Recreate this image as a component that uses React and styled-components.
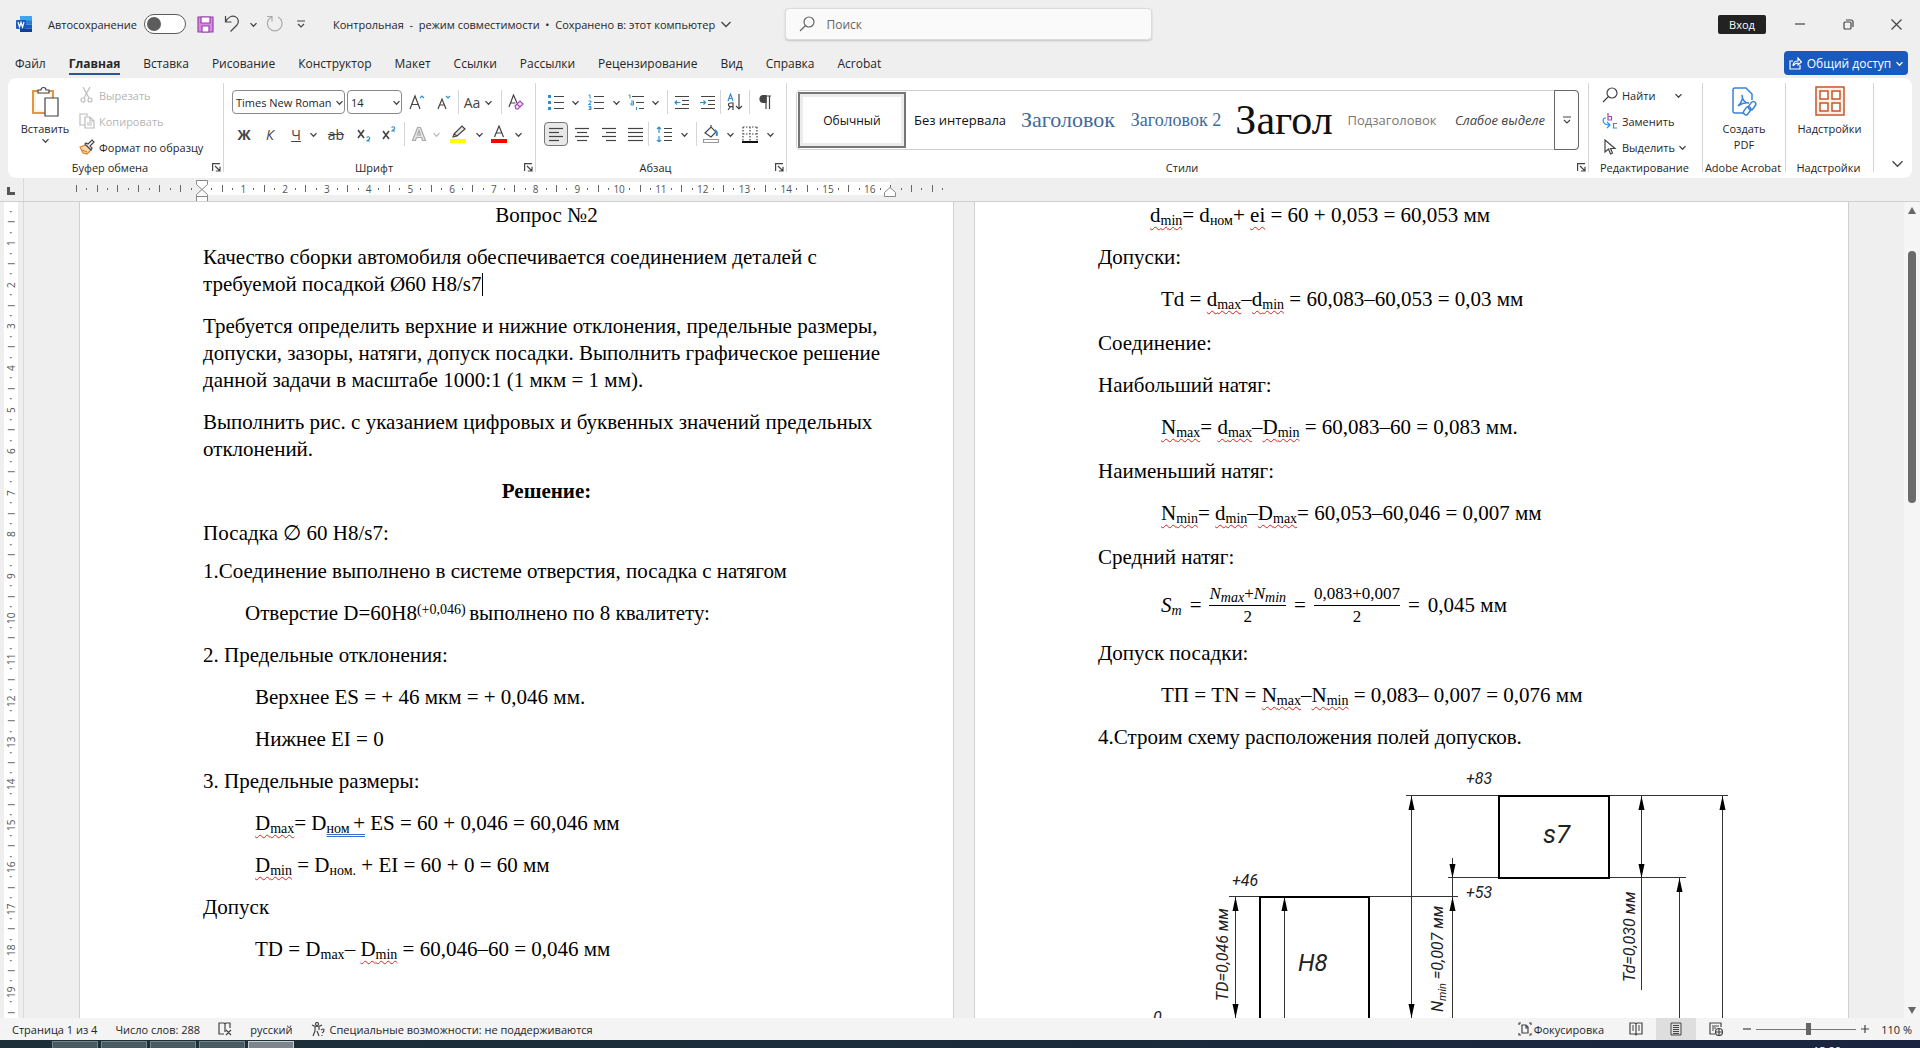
import React, { useState } from 'react'
import styled, { createGlobalStyle, css } from 'styled-components'

const GlobalStyle = createGlobalStyle`
    * {
        box-sizing: border-box;
    }
    body {
        margin: 0;
        background: #efefef;
        color: #262626;
        font-family: 'Open Sans', 'Noto Sans', sans-serif;
        font-size: 12px;
        overflow: hidden;
    }
    button, input, select {
        font: inherit;
        color: inherit;
        margin: 0;
        padding: 0;
        border: 0;
        background: none;
    }
    svg {
        display: block;
        flex: none;
    }
`;

const Window = styled.div`
    display: flex;
    flex-direction: column;
    height: 100vh;
    min-width: 1200px;
    white-space: nowrap;
`;

// @TITLE BAR
const TitleBar = styled.header`
    display: grid;
    grid-template-columns: 1fr 367px 1fr;
    align-items: center;
    height: 48px;
    padding: 0 0 0 16px;
    column-gap: 8px;
`;
const QuickBar = styled.div`
    display: flex;
    align-items: center;
`;
const AutoSave = styled.label`
    display: flex;
    align-items: center;
    justify-content: space-between;
    width: 138px;
    margin: 0 11px 0 15px;
    font-size: 11px;
`;
const Switch = styled.input`
    appearance: none;
    width: 42px;
    height: 20px;
    border: 1px solid #5c5c5c;
    border-radius: 10px;
    background: #fff;
    &::before {
        content: '';
        display: block;
        width: 14px;
        height: 14px;
        margin: 2px;
        border-radius: 50%;
        background: #5c5c5c;
    }
`;
const DocName = styled.button`
    display: flex;
    align-items: center;
    gap: 6px;
    margin-left: 22px;
    font-size: 11px;
    white-space: pre;
`;
const Search = styled.label`
    display: flex;
    align-items: center;
    gap: 12px;
    height: 32px;
    padding: 0 13px;
    border: 1px solid #dcdcdc;
    border-radius: 4px;
    background: #fafafa;
    box-shadow: 0 1px 2px #c4c4c4;
    color: #666;
    input {
        flex: 1;
        outline: 0;
    }
    input::placeholder {
        color: #666;
        opacity: 1;
    }
`;
const WindowButtons = styled.div`
    display: flex;
    align-items: center;
    justify-content: flex-end;
`;
const SignIn = styled.button`
    width: 48px;
    height: 19px;
    margin-right: 10px;
    border-radius: 2px;
    background: #222;
    color: #fff;
    font-size: 11px;
`;
const WindowButton = styled.button`
    display: flex;
    justify-content: center;
    width: 48px;
`;

// @TABS
const TabBar = styled.nav`
    display: flex;
    align-items: center;
    justify-content: space-between;
    height: 30px;
    padding: 0 12px 0 15px;
`;
const Tabs = styled.div`
    display: flex;
    gap: 23px;
`;
const Tab = styled.button`
    height: 24px;
    padding-top: 2px;
    border-bottom: 2px solid transparent;
    ${props => props.$active && css`
        border-color: #2b579a;
        font-weight: 700;
    `}
`;
const Share = styled.button`
    display: flex;
    align-items: center;
    justify-content: center;
    gap: 5px;
    width: 124px;
    height: 24px;
    border-radius: 4px;
    background: #185abd;
    color: #fff;
`;

// @RIBBON
const Ribbon = styled.section`
    display: flex;
    height: 100px;
    margin: 0 8px;
    padding: 5px 0 6px;
    border-radius: 8px;
    background: #fff;
`;
const Group = styled.div`
    display: flex;
    flex-direction: column;
    flex: ${props => props.$width ? `0 0 ${props.$width}px` : '1'};
    min-width: 0;
    border-right: 1px solid #d6d6d6;
`;
const GroupBody = styled.div`
    display: flex;
    flex: 1;
    padding: ${props => props.$pad || '0'};
`;
const GroupLabel = styled.div`
    display: flex;
    align-items: center;
    height: 16px;
    padding-right: 2px;
    margin-bottom: -3px;
    font-size: 11px;
    span {
        flex: 1;
        text-align: center;
    }
`;
const BigButton = styled.button`
    display: flex;
    flex-direction: column;
    align-items: center;
    width: ${props => props.$width};
    padding-top: 3px;
    font-size: 11px;
    line-height: 16px;
    svg:first-child {
        margin-bottom: 4px;
    }
`;
const Stack = styled.div`
    display: flex;
    flex-direction: column;
    gap: 2px;
`;
const LineButton = styled.button`
    display: flex;
    align-items: center;
    gap: 4px;
    height: 24px;
    font-size: 11px;
    opacity: ${props => props.disabled ? '.35' : '1'};
`;
const ToolRows = styled.div`
    display: flex;
    flex-direction: column;
    gap: 8px;
`;
const ToolRow = styled.div`
    display: flex;
    align-items: center;
    height: 24px;
`;
const Tool = styled.button`
    display: flex;
    align-items: center;
    justify-content: center;
    width: ${props => props.$width || 26}px;
    height: 24px;
    color: #444;
    font-size: 14px;
    ${props => props.$active && css`
        border: 1px solid #777;
        border-radius: 4px;
        background: #e8e8e8;
    `}
`;
const Space = styled.i`
    width: ${props => props.$width}px;
`;
const Divider = styled.i`
    width: 1px;
    height: 24px;
    background: #d6d6d6;
`;
const Picker = styled.label`
    position: relative;
    width: ${props => props.$width}px;
    margin-right: 2px;
    select {
        appearance: none;
        width: 100%;
        height: 24px;
        padding: 0 12px 0 3px;
        border: 1px solid #8a8a8a;
        border-radius: 4px;
        background: #fff;
        font-size: 11px;
    }
    svg {
        position: absolute;
        right: 2px;
        top: 9px;
    }
`;
const Gallery = styled.div`
    display: flex;
    flex: 1;
    height: 60px;
    border: 1px solid #d0d0d0;
    border-radius: 4px;
    padding-left: 1px;
`;
const StyleCard = styled.button`
    flex: 0 1 108px;
    min-width: 0;
    height: 56px;
    margin-top: 1px;
    padding: 0 4px;
    overflow: hidden;
    ${props => props.$active && css`
        border: 2px solid #757575;
        box-shadow: inset 0 0 0 3px #ececec;
    `}
`;
const CardText = styled.span`
    display: block;
    font-size: ${props => props.$size || 12}px;
    font-family: ${props => props.$serif ? "'Liberation Serif', serif" : 'inherit'};
    font-style: ${props => props.$italic ? 'italic' : 'normal'};
    color: ${props => props.$color || '#111'};
`;
const GalleryMore = styled.button`
    display: flex;
    align-items: center;
    justify-content: center;
    flex: 0 0 25px;
    height: 60px;
    margin: -1px -1px 0 auto;
    border: 1px solid #666;
    border-radius: 0 4px 4px 0;
`;
const RibbonEnd = styled.button`
    display: flex;
    align-items: flex-end;
    justify-content: center;
    flex: 0 0 38px;
    padding: 0 0 3px 9px;
`;

// @RULERS
const RulerBar = styled.div`
    display: flex;
    height: 24px;
    border-bottom: 1px solid #cfcfcf;
`;
const Corner = styled.div`
    flex: 0 0 24px;
    padding: 9px 0 0 7px;
    border-right: 1px solid #dadada;
`;
const RulerTrack = styled.div`
    flex: 1;
    display: flex;
    justify-content: center;
    padding-right: 16px;
    overflow: hidden;
`;
const RulerSpread = styled.div`
    flex: 0 0 1770px;
`;
const Scale = styled.div`
    position: relative;
    display: grid;
    grid-template-columns: repeat(84, 1fr);
    align-items: center;
    width: 877px;
    height: 13px;
    margin: 4px 0 0 -8px;
    background: linear-gradient(to right, #efefef 131px, #fff 131px, #fff 819px, #efefef 819px);
`;
const Mark = styled.span`
    display: flex;
    align-items: center;
    justify-content: center;
    min-width: 0;
    min-height: 0;
    font-size: 10px;
    line-height: 10px;
    color: #555;
    i {
        width: 1px;
        height: ${props => props.$long ? '7px' : '2px'};
        background: #666;
    }
`;
const IndentMark = styled.svg`
    position: absolute;
    left: ${props => props.$left}px;
    top: ${props => props.$top}px;
`;
const SideRuler = styled.div`
    flex: 0 0 24px;
    padding: 0 5px 0 4px;
    border-right: 1px solid #dadada;
    overflow: hidden;
`;
const SideScale = styled.div`
    display: grid;
    grid-template-rows: repeat(78, 1fr);
    height: 816px;
    padding-top: 5px;
    background: #fff;
    ${Mark} {
        transform: rotate(-90deg);
    }
`;

// @DOCUMENT
const Workspace = styled.main`
    display: flex;
    flex: 1;
    min-height: 0;
`;
const Canvas = styled.div`
    display: flex;
    justify-content: center;
    gap: 20px;
    flex: 1;
    min-width: 0;
    overflow: hidden;
`;
const Page = styled.article`
    flex: 0 0 875px;
    padding: 0 63px 0 123px;
    border: solid #cfcfcf;
    border-width: 0 1px;
    background: #fff;
    color: #000;
    font: 21px/27px 'Liberation Serif', serif;
    overflow: hidden;
`;
const Para = styled.p`
    margin: 0 0 ${props => props.$after || 15}px;
    padding-left: ${props => props.$indent || 0}px;
    text-align: ${props => props.$center ? 'center' : 'left'};
    font-weight: ${props => props.$bold ? 700 : 400};
`;
const Sub = styled.sub`
    font-size: 14px;
    line-height: 0;
    vertical-align: -3px;
`;
const Sup = styled.sup`
    font-size: 14px;
    line-height: 0;
    vertical-align: 6px;
`;
const Misspelt = styled.span`
    text-decoration: underline wavy #e02020 1px;
    text-decoration-skip-ink: none;
    text-underline-offset: 4px;
`;
const Grammar = styled.span`
    text-decoration: underline double #3a6cc8 1px;
    text-decoration-skip-ink: none;
    text-underline-offset: 4px;
`;
const Caret = styled.i`
    display: inline-block;
    width: 1px;
    height: 23px;
    background: #000;
    vertical-align: -5px;
`;
const Equation = styled.div`
    display: flex;
    align-items: center;
    gap: 8px;
    height: 38px;
    margin-bottom: 16px;
    padding-left: 63px;
`;
const Fraction = styled.span`
    display: flex;
    flex-direction: column;
    align-items: center;
    font-size: 17px;
    line-height: 22px;
    span:first-child {
        border-bottom: 1px solid #000;
    }
`;
const Figure = styled.svg`
    margin-left: 43px;
    font: italic 16px Roboto, 'Open Sans', sans-serif;
`;
const ScrollBar = styled.div`
    display: flex;
    flex-direction: column;
    align-items: center;
    flex: 0 0 16px;
    padding: 5px 0 4px;
    background: #f5f5f5;
`;
const ScrollThumb = styled.div`
    width: 8px;
    height: 252px;
    margin: 37px 0 auto;
    border-radius: 4px;
    background: #6b6b6b;
`;

// @STATUS BAR
const StatusBar = styled.footer`
    display: flex;
    align-items: center;
    height: 22px;
    padding: 0 8px 0 12px;
    background: #f4f4f4;
    font-size: 11px;
`;
const StatusItem = styled.button`
    display: flex;
    align-items: center;
    gap: 4px;
    margin-right: 18px;
`;
const Focus = styled(StatusItem)`
    gap: 2px;
    margin: 0 12px 0 auto;
`;
const ViewButton = styled.button`
    display: flex;
    align-items: center;
    justify-content: center;
    width: 40px;
    height: 22px;
    background: ${props => props.$active ? '#dedede' : 'none'};
`;
const Zoom = styled.div`
    display: flex;
    align-items: center;
    gap: 5px;
    margin-left: 7px;
    output {
        width: 38px;
        text-align: right;
    }
`;
const Slider = styled.input`
    appearance: none;
    width: 100px;
    height: 12px;
    background: linear-gradient(#777, #777) center / 100% 1px no-repeat;
    &::-webkit-slider-thumb {
        appearance: none;
        width: 5px;
        height: 12px;
        background: #666;
    }
`;
const TaskBar = styled.div`
    display: flex;
    gap: 3px;
    height: 8px;
    padding: 1px 79px 0 52px;
    background: linear-gradient(to right, #1d3039, #1b2b3a 50%, #1a2440);
    overflow: hidden;
`;
const Task = styled.div`
    width: 46px;
    height: 20px;
    border: 1px solid ${props => props.$active ? '#c9ced2' : '#74848a'};
    background: ${props => props.$active ? '#7d858c' : '#4a5a61'};
`;
const Clock = styled.time`
    margin-left: auto;
    padding-top: 2px;
    color: #fff;
    font-size: 11px;
`;

const Icon = ({ w = 16, h = 16, children }) => (
    <svg width={w} height={h} viewBox={`0 0 ${w} ${h}`} fill="none" stroke="#444" strokeWidth="1.2">{children}</svg>
)
const Chevron = ({ color = '#444', size = 7 }) => (
    <svg width={size} height={size} viewBox={`0 0 ${size} ${size}`} fill="none" stroke={color} strokeWidth="1.3">
        <path d={`M.5 ${size * 0.3}L${size / 2} ${size * 0.75}L${size - 0.5} ${size * 0.3}`} />
    </svg>
)
const Launcher = () => (
    <Icon w={9} h={9}><path d="M.6 8V.6H8M3 3l5 5M8 3.8V8H3.8" /></Icon>
)
const Lines = ({ rows }) => (
    <Icon w={15} h={15}>{rows.map(([x, len], i) => <path key={i} d={`M${x} ${1.5 + i * 4}h${len}`} />)}</Icon>
)

const TABS = ['Файл', 'Главная', 'Вставка', 'Рисование', 'Конструктор', 'Макет', 'Ссылки', 'Рассылки', 'Рецензирование', 'Вид', 'Справка', 'Acrobat']

function Title () {
    return (
        <TitleBar>
            <QuickBar>
                <svg width="17" height="17" viewBox="0 0 17 17">
                    <path d="M4 0h12v5H4z" fill="#41a5ee" /><path d="M4 4.5h12v4H4z" fill="#2b7cd3" />
                    <path d="M4 8.5h12v4H4z" fill="#185abd" /><path d="M4 12.5h12V16H4z" fill="#103f91" />
                    <rect y="4" width="10" height="9" rx="1" fill="#185abd" />
                    <path d="m2 6 1.5 5L5 6.5 6.5 11 8 6" stroke="#fff" strokeWidth="1.2" fill="none" />
                </svg>
                <AutoSave>Автосохранение<Switch type="checkbox" /></AutoSave>
                <button aria-label="Сохранить">
                    <Icon w={17} h={17}><path d="M1 1h15v15H1z" fill="#d58be0" stroke="#9b3fae" /><path d="M4 1h9v6H4zM5 16v-6h7v6z" fill="#fff" stroke="#9b3fae" /></Icon>
                </button>
                <Tool $width={36} aria-label="Отменить"><Icon w={16} h={18}><path d="M1.5 1v6h6M1.5 7C4 2 8 .5 11 1.5c4 1.500 4 6 2 8.500L6.500 16.500" /></Icon></Tool>
                <Chevron />
                <Tool $width={34} aria-label="Повторить"><Icon w={17} h={18}><g stroke="#aaa"><path d="M1 1.500h5v5M5.500 2A7.300 7.300 0 1 0 12 2" /></g></Icon></Tool>
                <Tool $width={20} aria-label="Настроить панель"><Icon w={8} h={8}><path d="M0 1h8M1 4l3 3 3-3" /></Icon></Tool>
                <DocName>{'Контрольная  -  режим совместимости  •  Сохранено в: этот компьютер'}<Chevron size={10} /></DocName>
            </QuickBar>
            <Search>
                <Icon><circle cx="10" cy="6" r="5" stroke="#666" /><path d="M6.500 9.500 1 15" stroke="#666" /></Icon>
                <input type="search" placeholder="Поиск" aria-label="Поиск" />
            </Search>
            <WindowButtons>
                <SignIn>Вход</SignIn>
                <WindowButton aria-label="Свернуть"><Icon w={10} h={10}><path d="M0 5h10" /></Icon></WindowButton>
                <WindowButton aria-label="Восстановить"><Icon w={11} h={11}><rect x="1" y="3" width="7" height="7" rx="1" /><path d="M3 1h5q2 0 2 2v5" /></Icon></WindowButton>
                <WindowButton aria-label="Закрыть"><Icon w={11} h={11}><path d="m.5.5 10 10M10.500.5l-10 10" /></Icon></WindowButton>
            </WindowButtons>
        </TitleBar>
    )
}

function Clipboard () {
    return (
        <Group $width={216}>
            <GroupBody $pad="0 0 0 3px">
                <BigButton $width="68px">
                    <Icon w={28} h={31}>
                        <path d="M2 5h20v22H2z" fill="#fdf3e4" stroke="#e3963e" strokeWidth="2" />
                        <path d="M5 8h14v16H5z" fill="#fff" stroke="none" />
                        <path d="M7 7V4h3a2.500 2.500 0 0 1 5 0h3v3z" fill="#fff" />
                        <path d="M14 12h13v18H14z" fill="#fff" />
                    </Icon>
                    Вставить
                    <Chevron />
                </BigButton>
                <Stack>
                    <LineButton disabled><Icon><path d="m4 0 6 11M11 0 5 11" /><circle cx="4" cy="13" r="2" /><circle cx="11" cy="13" r="2" /></Icon>Вырезать</LineButton>
                    <LineButton disabled><Icon><path d="M6 12H1V1h7v2M6 4h5l4 4v7H6zM11 4v4h4M8 10h5M8 12h5" /></Icon>Копировать</LineButton>
                    <LineButton>
                        <Icon><path d="m1 8 3 6 4 1 4-4-5-5z" fill="#fbd9ae" stroke="#d9822b" /><path d="m3 11 5 2" stroke="#d9822b" /><path d="m6 5 6 6 1-2-2-2 4-4-2-2-4 4-2-1z" fill="#fff" /></Icon>
                        Формат по образцу
                    </LineButton>
                </Stack>
            </GroupBody>
            <GroupLabel><span>Буфер обмена</span><Launcher /></GroupLabel>
        </Group>
    )
}

function FontGroup () {
    return (
        <Group $width={312}>
            <GroupBody $pad="7px 0 0 8px">
                <ToolRows>
                    <ToolRow>
                        <Picker $width={113}>
                            <select aria-label="Шрифт"><option>Times New Roman</option></select>
                            <Chevron />
                        </Picker>
                        <Picker $width={55}>
                            <select aria-label="Размер шрифта"><option>14</option></select>
                            <Chevron />
                        </Picker>
                        <Tool $width={26} aria-label="Увеличить размер"><Icon><path d="m1 15 5-13 5 13M3 10.500h6" /><path d="m11 4 2-2 2 2" stroke="#2f8fd0" /></Icon></Tool>
                        <Tool $width={28} aria-label="Уменьшить размер"><Icon><path d="m2 15 4-10 4 10M3.500 11h5" /><path d="m10 2 2 2 2-2" stroke="#2f8fd0" /></Icon></Tool>
                        <Divider />
                        <Tool $width={26}>Aa</Tool><Chevron />
                        <Space $width={9} />
                        <Divider />
                        <Tool $width={28} aria-label="Очистить формат"><Icon><path d="M1 13 5.500 1 9 9M2.500 9h5" /><path d="m7 12 5-5 3 3-5 5H8zM9 10l3 3" stroke="#a347b5" fill="#f5e3f8" /></Icon></Tool>
                    </ToolRow>
                    <ToolRow>
                        <Tool $width={24}><b>Ж</b></Tool>
                        <Tool $width={28}><i>К</i></Tool>
                        <Tool $width={24}><u>Ч</u></Tool><Tool $width={10}><Chevron /></Tool>
                        <Tool $width={36}><s>ab</s></Tool>
                        <Tool $width={20} aria-label="Подстрочный"><Icon><path d="m2 4 6 8M8 4l-6 8" strokeWidth="1.600" /><path d="M10.500 11.500q2-1.500 3 0t-3 3.500h3.500" stroke="#2f8fd0" /></Icon></Tool>
                        <Tool $width={30} aria-label="Надстрочный"><Icon><path d="m2 5 6 8M8 5l-6 8" strokeWidth="1.600" /><path d="M10.500 1.500q2-1.500 3 0t-3 3.500h3.500" stroke="#2f8fd0" /></Icon></Tool>
                        <Divider />
                        <Tool $width={28} aria-label="Эффекты"><Icon><path d="M1.500 14.500 6.500 1.500h3l5 13h-3l-1-3h-5l-1 3zM6.500 9h3L8 4.500z" stroke="#aaa" fill="#e6e6e6" /></Icon></Tool>
                        <Chevron color="#bbb" />
                        <Tool $width={36} aria-label="Выделение цветом"><Icon w={16} h={18}><path d="m4 9 8-8 3 3-8 7-4 1zM4 9l3 2" fill="#e8e8e8" /><path d="M0 14h16v4H0z" fill="#ffff00" stroke="none" /></Icon></Tool>
                        <Chevron />
                        <Tool $width={32} aria-label="Цвет текста"><Icon w={16} h={18}><path d="M3.500 12 8 1l4.500 11M5 8h6" /><path d="M0 14h16v4H0z" fill="#f00" stroke="none" /></Icon></Tool>
                        <Chevron />
                    </ToolRow>
                </ToolRows>
            </GroupBody>
            <GroupLabel><span>Шрифт</span><Launcher /></GroupLabel>
        </Group>
    )
}

function ParagraphGroup () {
    const blue = '#2f8fd0'
    return (
        <Group $width={251}>
            <GroupBody $pad="7px 0 0 8px">
                <ToolRows>
                    <ToolRow>
                        <Tool $width={24} aria-label="Маркеры"><Icon><path d="M6 2.500h10M6 8.500h10M6 14.500h10" /><path d="M0 1h3v3H0zM0 7h3v3H0zM0 13h3v3H0z" fill={blue} stroke="none" /></Icon></Tool><Tool $width={14}><Chevron /></Tool>
                        <Tool $width={28} aria-label="Нумерация"><Icon><path d="M6 2.500h10M6 8.500h10M6 14.500h10" /><path d="M.5 1h1.500v3.500M.5 7H3v1.500L.5 10.500H3M.5 12.500H3v3H.5M1 14h2" stroke={blue} strokeWidth="1" /></Icon></Tool><Tool $width={12}><Chevron /></Tool>
                        <Tool $width={28} aria-label="Многоуровневый список"><Icon><path d="M4 2.500h12M8 8.500h8M11 14.500h5" /><path d="M.5 1H2v3.500M3 7h2.500v4H3V9h2M8.500 13v3" stroke={blue} strokeWidth="1" /></Icon></Tool><Tool $width={10}><Chevron /></Tool>
                        <Space $width={7} />
                        <Divider />
                        <Tool $width={26} aria-label="Уменьшить отступ"><Icon w={15} h={15}><path d="M1 1.500h14M8 5.500h7M8 9.500h7M1 13.500h14" /><path d="M6.500 7.500H1m2-2-2 2 2 2" stroke={blue} /></Icon></Tool>
                        <Tool $width={26} aria-label="Увеличить отступ"><Icon w={15} h={15}><path d="M1 1.500h14M8 5.500h7M8 9.500h7M1 13.500h14" /><path d="M0 7.500h5.500m-2-2 2 2-2 2" stroke={blue} /></Icon></Tool>
                        <Divider />
                        <Tool $width={28} aria-label="Сортировка"><Icon w={16} h={18}><path d="m1 8 2.500-7L6 8M2 5.500h3" stroke={blue} /><path d="M6 17v-7H3.500q-2 0-2 1.800t2 1.800H6M3.500 13.600 1 17M12 1v15m-3-3 3 3 3-3" /></Icon></Tool>
                        <Divider />
                        <Tool $width={30} aria-label="Знаки"><Icon w={14} h={16}><path d="M6 2h7M8 2v13M11.500 2v13" /><path d="M8 1.500H5.500a3.500 3.500 0 0 0 0 7H8z" fill="#444" /></Icon></Tool>
                    </ToolRow>
                    <ToolRow>
                        <Tool $width={24} $active aria-label="По левому краю"><Lines rows={[[0, 14], [0, 10], [0, 14], [0, 10]]} /></Tool>
                        <Tool $width={28} aria-label="По центру"><Lines rows={[[0, 14], [2, 10], [0, 14], [2, 10]]} /></Tool>
                        <Tool $width={26} aria-label="По правому краю"><Lines rows={[[0, 14], [4, 10], [0, 14], [4, 10]]} /></Tool>
                        <Tool $width={26} aria-label="По ширине"><Lines rows={[[0, 15], [0, 15], [0, 15], [0, 15]]} /></Tool>
                        <Divider />
                        <Tool $width={30} aria-label="Интервал"><Icon><path d="M8 2.500h8M8 6.500h8M8 10.500h8M8 14.500h8" /><path d="M3 1v6M1 3l2-2 2 2M3 16v-6M1 14l2 2 2-2" stroke={blue} /></Icon></Tool>
                        <Tool $width={10}><Chevron /></Tool>
                        <Space $width={7} />
                        <Divider />
                        <Tool $width={28} aria-label="Заливка"><Icon w={16} h={18}><path d="m2 8 6-6 5 5-5 5zM8 2V0" /><path d="M12 5q3 2 1.500 6" stroke={blue} strokeWidth="2" /><path d="M.5 14.500h15v3H.5z" fill="#fff" stroke="#999" /></Icon></Tool>
                        <Tool $width={10}><Chevron /></Tool>
                        <Tool $width={30} aria-label="Границы"><Icon w={16} h={17}><path d="M1 1h14M1 8h14M1 1v14M8 1v14M15 1v14" strokeDasharray="1.500 1.500" /><path d="M0 16h16" stroke="#111" strokeWidth="2" /></Icon></Tool>
                        <Tool $width={10}><Chevron /></Tool>
                    </ToolRow>
                </ToolRows>
            </GroupBody>
            <GroupLabel><span>Абзац</span><Launcher /></GroupLabel>
        </Group>
    )
}

function StylesGroup () {
    return (
        <Group>
            <GroupBody $pad="7px 9px 0 9px">
                <Gallery>
                    <StyleCard $active><CardText>Обычный</CardText></StyleCard>
                    <StyleCard><CardText $size={13}>Без интервала</CardText></StyleCard>
                    <StyleCard><CardText $serif $size={22} $color="#44699b">Заголовок</CardText></StyleCard>
                    <StyleCard><CardText $serif $size={18} $color="#44699b">Заголовок 2</CardText></StyleCard>
                    <StyleCard><CardText $serif $size={42}>Загол</CardText></StyleCard>
                    <StyleCard><CardText $size={13} $color="#777">Подзаголовок</CardText></StyleCard>
                    <StyleCard><CardText $size={13} $italic $color="#444">Слабое выделе</CardText></StyleCard>
                    <GalleryMore aria-label="Дополнительно"><Icon w={8} h={8}><path d="M0 1h8M1 4l3 3 3-3" /></Icon></GalleryMore>
                </Gallery>
            </GroupBody>
            <GroupLabel><span>Стили</span><Launcher /></GroupLabel>
        </Group>
    )
}

function RightGroups () {
    return (
        <>
            <Group $width={114}>
                <GroupBody $pad="0 0 0 13px">
                    <Stack>
                        <LineButton><Icon><circle cx="10" cy="6" r="5" /><path d="M6.500 9.500 1 15" /></Icon>Найти<Tool as="span" $width={38}><Chevron /></Tool></LineButton>
                        <LineButton><Icon><path d="M6 0v7h3.500V3.500H6" stroke="#a347b5" /><path d="M15 10.500h-3.500V15H15M4 5Q0 5 1.500 9 3 12 7 12m-2-3 3 3-3 3" stroke="#2f8fd0" /></Icon>Заменить</LineButton>
                        <LineButton><Icon><path d="M3 1v12l3.500-3 2 5 2-1-2-4.500H13z" /></Icon>Выделить<Chevron /></LineButton>
                    </Stack>
                </GroupBody>
                <GroupLabel><span>Редактирование</span></GroupLabel>
            </Group>
            <Group $width={83}>
                <GroupBody>
                    <BigButton $width="100%">
                        <Icon w={28} h={31}>
                            <g stroke="#3b82d9" strokeWidth="1.500"><path d="M13 27H5q-2 0-2-2V4q0-2 2-2h11l6 6v6M8 20c4-4 5-8 4-11 0 6 4 8 7 8-4-1-8 1-11 3" /><rect x="20" y="15" width="5" height="9" rx="2.500" transform="rotate(35 22 19)" /><rect x="15" y="20" width="5" height="9" rx="2.500" transform="rotate(35 17 24)" /></g>
                        </Icon>
                        <span>Создать<br />PDF</span>
                    </BigButton>
                </GroupBody>
                <GroupLabel><span>Adobe Acrobat</span></GroupLabel>
            </Group>
            <Group $width={88}>
                <GroupBody>
                    <BigButton $width="100%">
                        <Icon w={30} h={31}><g stroke="#c8562b" strokeWidth="1.500"><path d="M1 1h28v28H1z" fill="#fdf0e6" /><path d="M5 5h8v8H5zM17 5h8v8h-8zM5 17h8v8H5zM17 17h8v8h-8z" fill="#fff" /></g></Icon>
                        Надстройки
                    </BigButton>
                </GroupBody>
                <GroupLabel><span>Надстройки</span></GroupLabel>
            </Group>
        </>
    )
}

// quarter-centimetre marks; whole centimetres carry a number
const marks = (from, to) => {
    const list = []
    for (let q = from; q <= to; q++) {
        const num = q > 0 && q <= 76 && q % 4 === 0
        list.push({ q, num: num ? q / 4 : null })
    }
    return list
}

function Rulers () {
    return (
        <RulerBar>
            <Corner><svg width="8" height="8"><path d="M1.500 0v6.500H8" fill="none" stroke="#555" strokeWidth="3" /></svg></Corner>
            <RulerTrack>
                <RulerSpread>
                    <Scale>
                        {marks(-12, 71).map(({ q, num }) => (
                            <Mark key={q} $long={q % 2 === 0}>{q === 0 ? null : num && num < 17 ? num : <i />}</Mark>
                        ))}
                        <IndentMark $left={125} $top={-2} width="13" height="23" viewBox="0 0 13 23" fill="#fff" stroke="#888">
                            <path d="M.5.5h11v4L6 9.500.5 4.500zM6 9.500l5.500 5v2H.5v-2zM.5 16.500h11v5H.5z" />
                        </IndentMark>
                        <IndentMark $left={813} $top={5} width="13" height="12" viewBox="0 0 13 12" fill="#fff" stroke="#888">
                            <path d="M6 .5l5.500 5v4H.5v-4z" />
                        </IndentMark>
                    </Scale>
                </RulerSpread>
            </RulerTrack>
        </RulerBar>
    )
}

const Max = ({ v }) => <Misspelt>{v}<Sub>max</Sub></Misspelt>
const Min = ({ v }) => <Misspelt>{v}<Sub>min</Sub></Misspelt>

function FirstPage () {
    return (
        <Page>
            <Para $center>Вопрос №2</Para>
            <Para>Качество сборки автомобиля обеспечивается соединением деталей с<br />требуемой посадкой Ø60 H8/s7<Caret /></Para>
            <Para>Требуется определить верхние и нижние отклонения, предельные размеры,<br />допуски, зазоры, натяги, допуск посадки. Выполнить графическое решение<br />данной задачи в масштабе 1000:1 (1 мкм = 1 мм).</Para>
            <Para>Выполнить рис. с указанием цифровых и буквенных значений предельных<br />отклонений.</Para>
            <Para $center $bold>Решение:</Para>
            <Para $after={11}>Посадка ∅ 60 H8/s7:</Para>
            <Para>1.Соединение выполнено в системе отверстия, посадка с натягом</Para>
            <Para $indent={42}>Отверстие D=60H8<Sup>(+0,046) </Sup>выполнено по 8 квалитету:</Para>
            <Para>2. Предельные отклонения:</Para>
            <Para $indent={52}>Верхнее ES = + 46 мкм = + 0,046 мм.</Para>
            <Para $indent={52}>Нижнее EI = 0</Para>
            <Para>3. Предельные размеры:</Para>
            <Para $indent={52}><Max v="D" />= D<Grammar><Sub>ном </Sub>+</Grammar> ES = 60 + 0,046 = 60,046 мм</Para>
            <Para $indent={52}><Min v="D" /> = D<Sub>ном.</Sub> + EI = 60 + 0 = 60 мм</Para>
            <Para>Допуск</Para>
            <Para $indent={52}>TD = D<Sub>max</Sub>– <Min v="D" /> = 60,046–60 = 0,046 мм</Para>
        </Page>
    )
}

const Arrow = ({ x, y, down }) => (
    <path d={down ? `M${x} ${y}l-3-14h6z` : `M${x} ${y}l-3 14h6z`} fill="#000" stroke="none" />
)

function ToleranceFigure () {
    return (
        <Figure width="600" height="300" viewBox="1142 760 600 300" fill="#222">
            <g stroke="#333" fill="none">
                <path d="M1407 795.500h322M1449 877.500h238M1230 896.500h229" />
                <path d="M1412.500 796v222M1723.500 796v264M1642.500 796v194M1680.500 878v182M1453.500 858v202M1236.500 897v163M1285.500 897v163" />
            </g>
            <g stroke="#000" strokeWidth="2" fill="none">
                <path d="M1500 796h110v82h-110zM1261 1060V897h109v163" />
            </g>
            <Arrow x={1412.5} y={796} /><Arrow x={1412.5} y={1018} down />
            <Arrow x={1723.5} y={796} />
            <Arrow x={1642.5} y={796} /><Arrow x={1642.5} y={878} down />
            <Arrow x={1680.5} y={878} />
            <Arrow x={1453.5} y={878} down /><Arrow x={1453.5} y={897} />
            <Arrow x={1236.5} y={897} /><Arrow x={1236.5} y={1018} down />
            <Arrow x={1285.5} y={897} />
            <text x="1467" y="784">+83</text>
            <text x="1233" y="886">+46</text>
            <text x="1467" y="898">+53</text>
            <text x="1544" y="843" fontSize="26">s7</text>
            <text x="1299" y="971" fontSize="24">H8</text>
            <text x="1154" y="1023">0</text>
            <text transform="translate(1229 1001) rotate(-90)">TD=0,046 мм</text>
            <text transform="translate(1444 1012) rotate(-90)">N<tspan fontSize="11" dy="3">min</tspan><tspan dy="-3"> =0,007 мм</tspan></text>
            <text transform="translate(1636 982) rotate(-90)">Td=0,030 мм</text>
        </Figure>
    )
}

function SecondPage () {
    return (
        <Page>
            <Para $indent={52}><Min v="d" />= d<Sub>ном</Sub>+ <Misspelt>ei</Misspelt> = 60 + 0,053 = 60,053 мм</Para>
            <Para>Допуски:</Para>
            <Para $indent={63} $after={17}>Td = <Max v="d" />–<Min v="d" /> = 60,083–60,053 = 0,03 мм</Para>
            <Para>Соединение:</Para>
            <Para>Наибольший натяг:</Para>
            <Para $indent={63} $after={17}><Max v="N" />= <Max v="d" />–<Min v="D" /> = 60,083–60 = 0,083 мм.</Para>
            <Para>Наименьший натяг:</Para>
            <Para $indent={63} $after={17}><Min v="N" />= <Min v="d" />–<Max v="D" />= 60,053–60,046 = 0,007 мм</Para>
            <Para>Средний натяг:</Para>
            <Equation>
                <span><i>S<Sub>m</Sub></i></span>=
                <Fraction><span><i>N<Sub>max</Sub></i>+<i>N<Sub>min</Sub></i></span><span>2</span></Fraction>=
                <Fraction><span>0,083+0,007</span><span>2</span></Fraction>=
                <span>0,045 мм</span>
            </Equation>
            <Para>Допуск посадки:</Para>
            <Para $indent={63}>ТП = TN = <Max v="N" />–<Min v="N" /> = 0,083– 0,007 = 0,076 мм</Para>
            <Para $after={9}>4.Строим схему расположения полей допусков.</Para>
            <ToleranceFigure />
        </Page>
    )
}

function Status () {
    const [zoom, setZoom] = useState(110)
    return (
        <StatusBar>
            <StatusItem>Страница 1 из 4</StatusItem>
            <StatusItem>Число слов: 288</StatusItem>
            <StatusItem aria-label="Правописание"><Icon w={14} h={14}><path d="M6 12H1V1h5l1 1 1-1h4v5M7 2v8M8 8l5 5M13 8l-5 5" /></Icon></StatusItem>
            <StatusItem>русский</StatusItem>
            <StatusItem><Icon w={15} h={15}><circle cx="6" cy="2" r="1.500" /><path d="M1 3q5 3 10 0M4 5v4l-2 5M8 5v3M6 9l2 5M10 8q3-2 3 0t-2 3M11 13v1" /></Icon>Специальные возможности: не поддерживаются</StatusItem>
            <Focus><Icon w={14} h={14}><path d="M3 1H1v2M1 11v2h2M11 1h2v2M13 11v2h-2M4 3h4l2 2v6H4zM8 3v3h2" /></Icon>Фокусировка</Focus>
            <ViewButton aria-label="Режим чтения"><Icon w={14} h={14}><path d="M7 2v11M1 1h5l1 1 1-1h5v11H8l-1 1-1-1H1zM3 4h2M3 6h2M3 8h2M9 4h2M9 6h2M9 8h2" /></Icon></ViewButton>
            <ViewButton $active aria-label="Разметка страницы"><Icon w={12} h={14}><path d="M1 1h10v12H1zM3 3.500h6M3 5.500h6M3 7.500h6M3 9.500h6M3 11.500h6" strokeWidth="1" /></Icon></ViewButton>
            <ViewButton aria-label="Веб-документ"><Icon w={14} h={14}><path d="M6 12H1V1h11v4M3 4h7M3 6h4M3 8h2" /><circle cx="10" cy="10" r="3.500" /><path d="M6.500 10h7M10 6.500v7" /></Icon></ViewButton>
            <Zoom>
                <Icon w={8} h={8}><path d="M0 4h8" /></Icon>
                <Slider type="range" min="10" max="200" value={zoom} onChange={e => setZoom(e.target.value)} aria-label="Масштаб" />
                <Icon w={8} h={8}><path d="M0 4h8M4 0v8" /></Icon>
                <output>{zoom} %</output>
            </Zoom>
        </StatusBar>
    )
}

export default function App () {
    const [tab, setTab] = useState('Главная')
    return (
        <Window>
            <GlobalStyle />
            <Title />
            <TabBar>
                <Tabs>
                    {TABS.map(name => <Tab key={name} $active={name === tab} onClick={() => setTab(name)}>{name}</Tab>)}
                </Tabs>
                <Share><Icon w={13} h={13}><path d="M4 4H1v8h10V8M4 9q0-5 5-5V1l3.500 4L9 8V6Q6 6 4 9" stroke="#fff" /></Icon>Общий доступ<Chevron color="#fff" /></Share>
            </TabBar>
            <Ribbon>
                <Clipboard />
                <FontGroup />
                <ParagraphGroup />
                <StylesGroup />
                <RightGroups />
                <RibbonEnd aria-label="Свернуть ленту"><Chevron size={11} /></RibbonEnd>
            </Ribbon>
            <Rulers />
            <Workspace>
                <SideRuler>
                    <SideScale>
                        {marks(1, 78).map(({ q, num }) => <Mark key={q} $long={q % 2 === 0}>{num || <i />}</Mark>)}
                    </SideScale>
                </SideRuler>
                <Canvas>
                    <FirstPage />
                    <SecondPage />
                </Canvas>
                <ScrollBar>
                    <svg width="8" height="7"><path d="M4 0l4 7H0z" fill="#666" /></svg>
                    <ScrollThumb />
                    <svg width="8" height="7"><path d="M0 0h8L4 7z" fill="#666" /></svg>
                </ScrollBar>
            </Workspace>
            <Status />
            <TaskBar>
                <Task /><Task /><Task /><Task /><Task $active />
                <Clock>15:20</Clock>
            </TaskBar>
        </Window>
    )
}
